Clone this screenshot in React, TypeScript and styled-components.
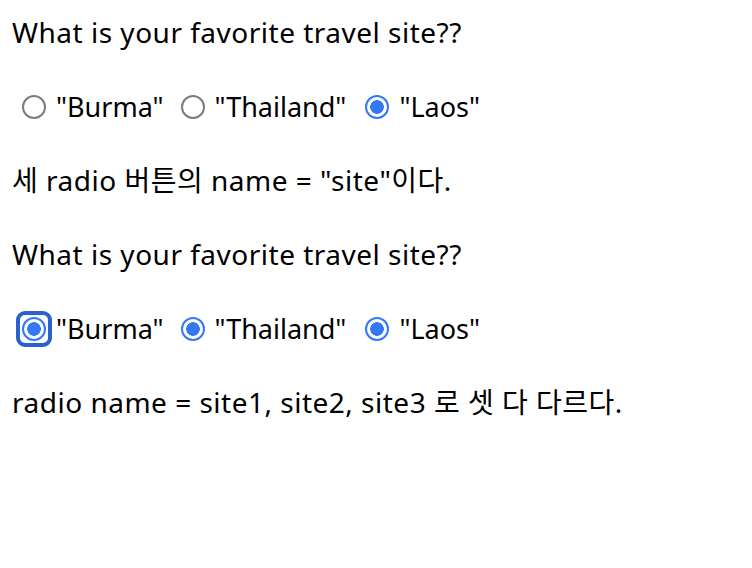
import React from "react";
import styled, { createGlobalStyle } from "styled-components";

const GlobalStyle = createGlobalStyle`
  body {
    margin: 14px 12px 12px;
    background: #ffffff;
    color: #000000;
    font-family: "Noto Sans", "Noto Sans CJK KR", sans-serif;
    font-size: 28px;
  }
`;

const Form = styled.form`
  display: flex;
  flex-direction: column;
  gap: 37px;
`;

const Line = styled.p`
  margin: 0;
  height: 37px;
  line-height: 37px;
  letter-spacing: 0.5px;
  white-space: nowrap;
`;

const Row = styled.div`
  display: flex;
  align-items: center;
  height: 37px;
  line-height: 37px;
  font-size: 27px;
  white-space: nowrap;
`;

const Option = styled.label<{ $offset: number }>`
  display: inline-flex;
  align-items: center;
  gap: 10px;
  margin-left: ${(p) => p.$offset}px;
`;

const RadioWrap = styled.span<{ $focused?: boolean }>`
  position: relative;
  display: inline-flex;

  &::after {
    content: "";
    display: ${(p) => (p.$focused ? "block" : "none")};
    position: absolute;
    left: -6px;
    top: -6px;
    right: -6px;
    bottom: -6px;
    border: 4px solid #2a61cc;
    border-radius: 9px;
  }
`;

const Radio = styled.input.attrs({ type: "radio" })`
  appearance: none;
  margin: 0;
  width: 24px;
  height: 24px;
  border-radius: 50%;
  border: 2px solid #7c7c7c;
  background: #ffffff;

  &:checked {
    border-color: #3478f6;
    background: radial-gradient(circle, #3478f6 0 6.5px, #ffffff 7.1px);
  }
`;

type Choice = { label: string; offset: number; checked?: boolean; focused?: boolean; name: string };

const RadioRow: React.FC<{ choices: Choice[] }> = ({ choices }) => (
  <Row>
    {choices.map((c) => (
      <Option key={c.label} $offset={c.offset}>
        <RadioWrap $focused={c.focused}>
          <Radio name={c.name} defaultChecked={c.checked} />
        </RadioWrap>
        "{c.label}"
      </Option>
    ))}
  </Row>
);

const App: React.FC = () => (
  <>
    <GlobalStyle />
    <Form onSubmit={(e) => e.preventDefault()}>
      <Line>What is your favorite travel site??</Line>
      <RadioRow
        choices={[
          { label: "Burma", offset: 10, name: "site" },
          { label: "Thailand", offset: 17, name: "site" },
          { label: "Laos", offset: 19, name: "site", checked: true },
        ]}
      />
      <Line>세 radio 버튼의 name = "site"이다.</Line>
      <Line>What is your favorite travel site??</Line>
      <RadioRow
        choices={[
          { label: "Burma", offset: 10, name: "site1", checked: true, focused: true },
          { label: "Thailand", offset: 17, name: "site2", checked: true },
          { label: "Laos", offset: 19, name: "site3", checked: true },
        ]}
      />
      <Line>radio name = site1, site2, site3 로 셋 다 다르다.</Line>
    </Form>
  </>
);

export default App;
